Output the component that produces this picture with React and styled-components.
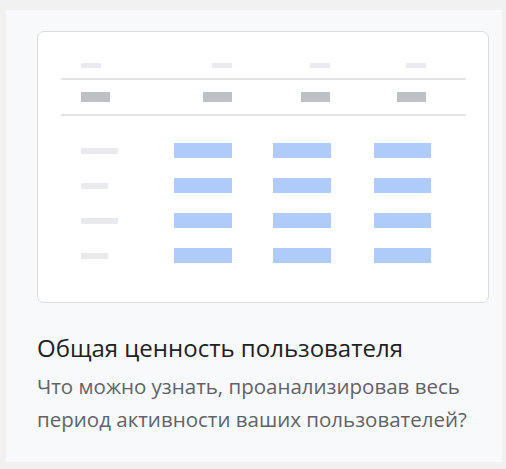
import React from 'react';
import styled, { createGlobalStyle } from 'styled-components';

const GlobalStyle = createGlobalStyle`
  body {
    margin: 0;
    background: #f1f1f1;
    font-family: "Open Sans", Roboto, Arial, sans-serif;
  }
`;

const Card = styled.div`
  box-sizing: border-box;
  width: 496px;
  height: 452px;
  margin: 10px 0 0 6px;
  padding: 21px 13px 0 31px;
  background: #f8f9fa;
`;

const Preview = styled.div`
  box-sizing: border-box;
  width: 452px;
  height: 272px;
  padding: 31px 22px 0 23px;
  background: #fff;
  border: 1px solid #dadce0;
  border-radius: 7px;
  display: flex;
  flex-direction: column;
`;

const Row = styled.div`
  display: grid;
  grid-template-columns: 93px 58px 99px 100px;
  align-items: center;
  padding-left: 20px;
  height: ${p => p.$h}px;
  margin-top: ${p => p.$top || 0}px;
`;

const Bar = styled.div`
  justify-self: ${p => (p.$first ? 'start' : 'end')};
  width: ${p => p.$w}px;
  height: ${p => p.$h}px;
  margin-right: ${p => p.$right || 0}px;
  background: ${p => p.$color};
`;

const Divider = styled.div`
  height: 2px;
  margin-top: ${p => p.$top}px;
  background: #e3e3e3;
`;

const Title = styled.h2`
  margin: 30px 0 0;
  font-size: 24px;
  font-weight: 400;
  line-height: 30px;
  color: #202124;
  white-space: nowrap;
`;

const Description = styled.p`
  margin: 7px 0 0;
  font-size: 20.5px;
  line-height: 33px;
  color: #5f6368;
  white-space: nowrap;
`;

const LIGHT = '#e8eaed';
const GRAY = '#bdc1c6';
const BLUE = '#aecbfa';

const labelWidths = [37, 27, 37, 27];

export default function App() {
  return (
    <>
      <GlobalStyle />
      <Card>
        <Preview>
          <Row $h={5}>
            <Bar $first $w={20} $h={5} $color={LIGHT} />
            <Bar $w={20} $h={5} $color={LIGHT} />
            <Bar $w={20} $h={5} $color={LIGHT} $right={1} />
            <Bar $w={20} $h={5} $color={LIGHT} $right={5} />
          </Row>
          <Divider $top={10} />
          <Row $h={10} $top={12}>
            <Bar $first $w={29} $h={10} $color={GRAY} />
            <Bar $w={29} $h={10} $color={GRAY} />
            <Bar $w={29} $h={10} $color={GRAY} $right={1} />
            <Bar $w={29} $h={10} $color={GRAY} $right={5} />
          </Row>
          <Divider $top={12} />
          {labelWidths.map((w, i) => (
            <Row key={i} $h={15} $top={i === 0 ? 27 : 20}>
              <Bar $first $w={w} $h={6} $color={LIGHT} />
              <Bar $w={58} $h={15} $color={BLUE} />
              <Bar $w={58} $h={15} $color={BLUE} />
              <Bar $w={57} $h={15} $color={BLUE} />
            </Row>
          ))}
        </Preview>
        <Title>Общая ценность пользователя</Title>
        <Description>
          Что можно узнать, проанализировав весь
          <br />
          период активности ваших пользователей?
        </Description>
      </Card>
    </>
  );
}
